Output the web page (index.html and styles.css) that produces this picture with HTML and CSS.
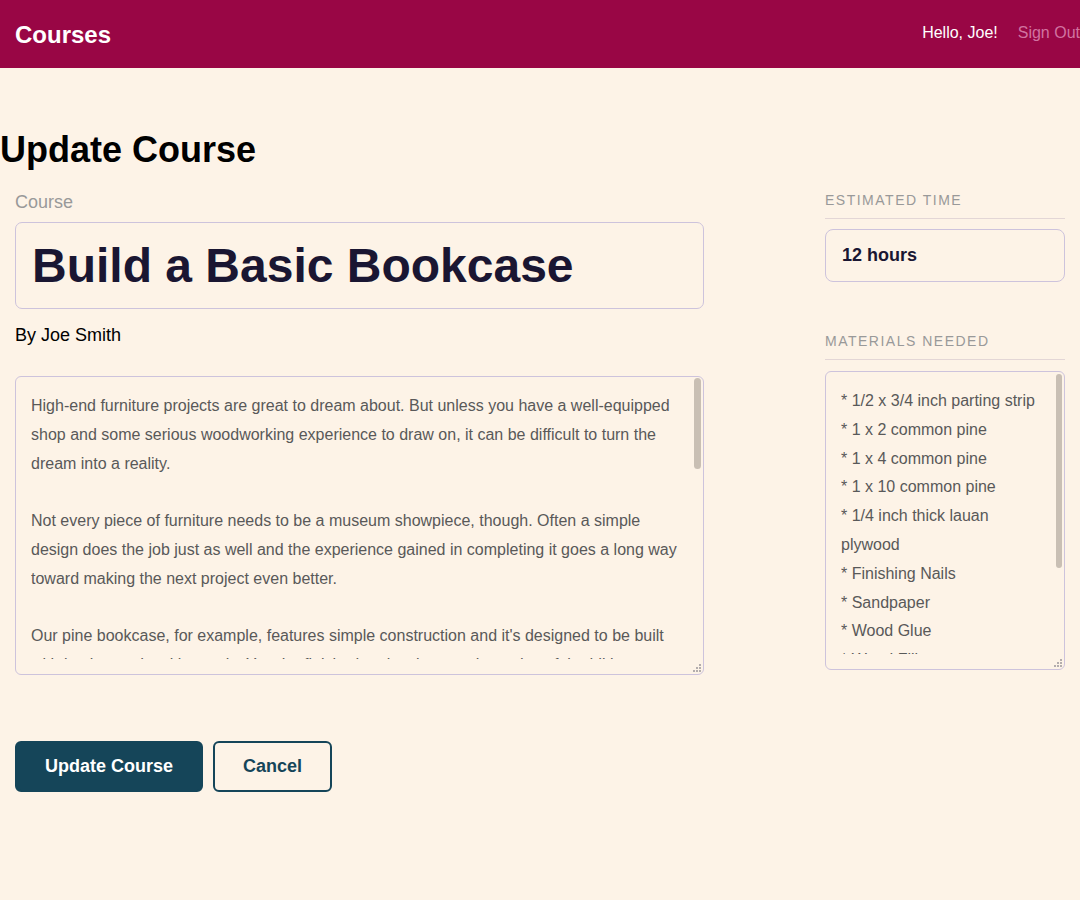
FILE: index.html
```html
<!DOCTYPE html>
<html lang="en">
<head>
<meta charset="utf-8">
<title>Update Course</title>
<link rel="stylesheet" href="styles.css">
</head>
<body>
<header class="header">
  <div class="brand">Courses</div>
  <nav class="nav">
    <span class="hello">Hello, Joe!</span>
    <a class="signout" href="#">Sign Out</a>
  </nav>
</header>
<main class="main">
  <h1 class="page-title">Update Course</h1>
  <form class="form">
    <div class="cols">
      <div class="col-main">
        <label class="label" for="title">Course</label>
        <input id="title" class="title-input" type="text" value="Build a Basic Bookcase">
        <p class="author">By Joe Smith</p>
        <div class="area-box desc-box">
          <textarea class="area">High-end furniture projects are great to dream about. But unless you have a well-equipped shop and some serious woodworking experience to draw on, it can be difficult to turn the dream into a reality.

Not every piece of furniture needs to be a museum showpiece, though. Often a simple design does the job just as well and the experience gained in completing it goes a long way toward making the next project even better.

Our pine bookcase, for example, features simple construction and it's designed to be built with basic woodworking tools. Yet, the finished project is a worthy and useful addition to any room of the house. While it's meant to rest on the floor, you can convert the bookcase to a wall-mounted storage unit by leaving off the baseboard. You can secure the cabinet to the wall by screwing through the cabinet cleats into the wall studs.

We made the case out of materials available at most building-supply dealers and lumberyards, including 1/2 x 3/4-in. parting strip, 1 x 2, 1 x 4 and 1 x 10 common pine and 1/4-in.-thick lauan plywood. Assembly is quick and easy with glue and nails, and when you're done with construction you have the option of a painted or clear finish.

As for basic tools, you'll need a portable circular saw, hammer, block plane, combination square, tape measure, metal rule, two clamps, nail set and putty knife. Other supplies include glue, nails, sandpaper, wood filler and varnish or paint and shellac.

The specifications that follow will produce a bookcase with overall dimensions of 10 3/4 in. deep x 34 in. wide x 48 in. tall. While the depth of the case is directly tied to the 1 x 10 stock, you can vary the height, width and shelf spacing to suit your needs. Keep in mind, though, that extending the width of the cabinet may require the addition of central shelf supports.</textarea>
          <span class="thumb desc-thumb"></span>
          <svg class="grip" width="8" height="8" viewBox="0 0 8 8" aria-hidden="true"><rect x="6" y="0" width="2" height="2"/><rect x="3" y="3" width="2" height="2"/><rect x="6" y="3" width="2" height="2"/><rect x="0" y="6" width="2" height="2"/><rect x="3" y="6" width="2" height="2"/><rect x="6" y="6" width="2" height="2"/></svg>
        </div>
      </div>
      <aside class="col-side">
        <div class="side-group">
          <h4 class="side-heading">Estimated Time</h4>
          <input class="time-input" type="text" value="12 hours">
        </div>
        <div class="side-group materials">
          <h4 class="side-heading">Materials Needed</h4>
          <div class="area-box mats-box">
            <textarea class="area">* 1/2 x 3/4 inch parting strip
* 1 x 2 common pine
* 1 x 4 common pine
* 1 x 10 common pine
* 1/4 inch thick lauan plywood
* Finishing Nails
* Sandpaper
* Wood Glue
* Wood Filler
* Minwax Oil Based Polyurethane
</textarea>
            <span class="thumb mats-thumb"></span>
            <svg class="grip" width="8" height="8" viewBox="0 0 8 8" aria-hidden="true"><rect x="6" y="0" width="2" height="2"/><rect x="3" y="3" width="2" height="2"/><rect x="6" y="3" width="2" height="2"/><rect x="0" y="6" width="2" height="2"/><rect x="3" y="6" width="2" height="2"/><rect x="6" y="6" width="2" height="2"/></svg>
          </div>
        </div>
      </aside>
    </div>
    <div class="actions">
      <button class="btn btn-primary" type="submit">Update Course</button>
      <button class="btn btn-secondary" type="button">Cancel</button>
    </div>
  </form>
</main>
</body>
</html>
```

FILE: styles.css
```css
* { box-sizing: border-box; }

html, body {
  margin: 0;
  padding: 0;
  background: #fdf3e7;
  font-family: "Liberation Sans", Arial, sans-serif;
  color: #000;
  overflow: hidden;
}

.header {
  height: 68px;
  background: #990645;
  display: flex;
  align-items: center;
  justify-content: space-between;
  padding-left: 15px;
}

.brand {
  color: #fff;
  font-size: 24px;
  font-weight: bold;
  line-height: 28px;
  padding-top: 2px;
}

.nav {
  display: flex;
  gap: 20px;
  font-size: 16px;
  line-height: 20px;
  padding-bottom: 2px;
}

.hello { color: #fff; }

.signout {
  color: #d173a0;
  text-decoration: none;
}

.main { padding: 0; }

.page-title {
  margin: 62px 0 0 0;
  font-size: 36px;
  line-height: 40px;
  font-weight: bold;
}

.form {
  padding: 0 15px;
}

.cols {
  display: flex;
  gap: 121px;
  margin-top: 21px;
}

.col-main {
  width: 689px;
  display: flex;
  flex-direction: column;
}

.label {
  font-size: 18px;
  line-height: 22px;
  color: #999;
}

.title-input {
  margin-top: 9px;
  height: 87px;
  width: 100%;
  background: transparent;
  border: 1px solid #cdc3dc;
  border-radius: 7px;
  padding: 0 16px;
  font-family: "Liberation Sans", Arial, sans-serif;
  font-size: 48px;
  font-weight: bold;
  color: #1a1632;
  outline: none;
}

.author {
  margin: 15px 0 0 0;
  font-size: 18px;
  line-height: 22px;
  color: #000;
}

.area-box {
  position: relative;
  height: 299px;
  border: 1px solid #cdc3dc;
  border-radius: 6px;
  padding: 15px;
}

.area {
  display: block;
  width: 100%;
  height: 100%;
  margin: 0;
  padding: 0;
  border: 0;
  background: transparent;
  font-family: "Liberation Sans", Arial, sans-serif;
  font-size: 16px;
  line-height: 28.8px;
  color: #595959;
  outline: none;
  resize: none;
  overflow-y: auto;
  scrollbar-width: none;
}

.area::-webkit-scrollbar { display: none; }

.thumb {
  position: absolute;
  right: 2px;
  width: 7px;
  border-radius: 4px;
  background: #c9bfb4;
}

.desc-thumb { top: 1px; height: 91px; }
.mats-thumb { top: 2px; height: 194px; right: 2px; width: 6px; }

.grip {
  position: absolute;
  right: 2px;
  bottom: 2px;
  fill: #b3adad;
}

.desc-box { margin-top: 30px; }

.col-side {
  width: 240px;
  display: flex;
  flex-direction: column;
  padding-top: 1px;
}

.side-heading {
  margin: 0;
  font-size: 14px;
  line-height: 17px;
  font-weight: normal;
  letter-spacing: 1.5px;
  text-transform: uppercase;
  color: #999;
  padding-bottom: 9px;
  border-bottom: 1px solid #e3d6d6;
}

.time-input {
  margin-top: 10px;
  width: 100%;
  height: 53px;
  background: transparent;
  border: 1px solid #cdc3dc;
  border-radius: 8px;
  padding: 0 16px;
  font-family: "Liberation Sans", Arial, sans-serif;
  font-size: 18px;
  font-weight: bold;
  color: #1a1632;
  outline: none;
}

.materials { margin-top: 51px; }
.mats-box { margin-top: 11px; height: 299px; }

.actions {
  display: flex;
  gap: 10px;
  margin-top: 66px;
}

.btn {
  height: 51px;
  padding: 0 28px;
  border: 2px solid #154559;
  border-radius: 6px;
  font-family: "Liberation Sans", Arial, sans-serif;
  font-size: 18px;
  font-weight: bold;
  cursor: pointer;
}

.btn-primary {
  background: #154559;
  color: #fff;
}

.btn-secondary {
  background: transparent;
  color: #154559;
}
```
